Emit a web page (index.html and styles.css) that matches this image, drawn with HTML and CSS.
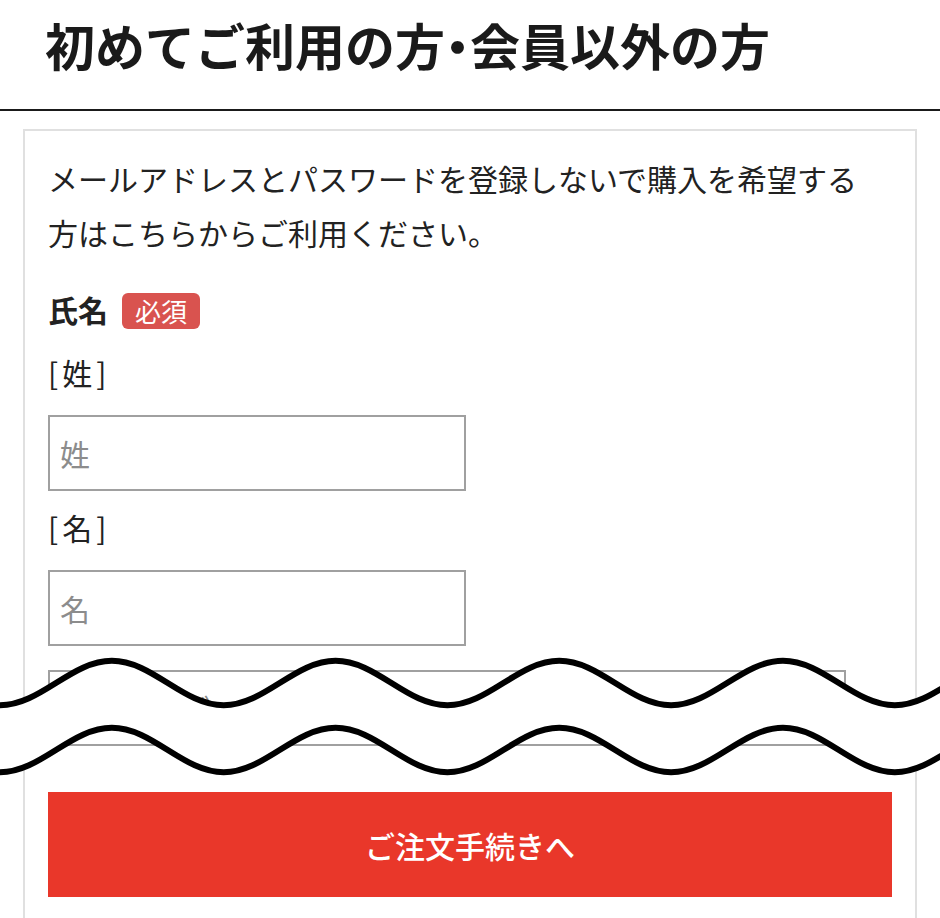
FILE: index.html
```html
<!DOCTYPE html>
<html lang="ja">
<head>
<meta charset="utf-8">
<title>初めてご利用の方・会員以外の方</title>
<link rel="stylesheet" href="styles.css">
</head>
<body>
<header class="page-head">
  <h1 class="page-title">初めてご利用の方<span class="dot">・</span>会員以外の方</h1>
</header>
<main class="card">
  <p class="lead">メールアドレスとパスワードを登録しないで購入を希望する<br>方はこちらからご利用ください。</p>
  <div class="field-head">
    <span class="field-name">氏名</span>
    <span class="badge">必須</span>
  </div>
  <div class="sub-label">[姓]</div>
  <input class="text-input half" type="text" placeholder="姓">
  <div class="sub-label">[名]</div>
  <input class="text-input half" type="text" placeholder="名">
  <input class="text-input wide" type="text" placeholder="例）ヤマダ">
  <button class="submit" type="button">ご注文手続きへ</button>
</main>
<div class="cut" aria-hidden="true">
  <svg class="cut-svg" viewBox="0 0 940 135" width="940" height="135">
    <path class="cut-fill" d="M0,55.25 c40.65,0 71.2,-44.5 111.85,-44.5 s71.2,44.5 111.85,44.5 s71.2,-44.5 111.85,-44.5 s71.2,44.5 111.85,44.5 s71.2,-44.5 111.85,-44.5 s71.2,44.5 111.85,44.5 s71.2,-44.5 111.85,-44.5 s71.2,44.5 111.85,44.5 s71.2,-44.5 111.85,-44.5 L1006.65,77.75 c-40.65,0 -71.2,44.5 -111.85,44.5 s-71.2,-44.5 -111.85,-44.5 s-71.2,44.5 -111.85,44.5 s-71.2,-44.5 -111.85,-44.5 s-71.2,44.5 -111.85,44.5 s-71.2,-44.5 -111.85,-44.5 s-71.2,44.5 -111.85,44.5 s-71.2,-44.5 -111.85,-44.5 s-71.2,44.5 -111.85,44.5 Z"/>
    <path class="cut-line" d="M0,55.25 c40.65,0 71.2,-44.5 111.85,-44.5 s71.2,44.5 111.85,44.5 s71.2,-44.5 111.85,-44.5 s71.2,44.5 111.85,44.5 s71.2,-44.5 111.85,-44.5 s71.2,44.5 111.85,44.5 s71.2,-44.5 111.85,-44.5 s71.2,44.5 111.85,44.5 s71.2,-44.5 111.85,-44.5"/>
    <path class="cut-line" d="M0,122.25 c40.65,0 71.2,-44.5 111.85,-44.5 s71.2,44.5 111.85,44.5 s71.2,-44.5 111.85,-44.5 s71.2,44.5 111.85,44.5 s71.2,-44.5 111.85,-44.5 s71.2,44.5 111.85,44.5 s71.2,-44.5 111.85,-44.5 s71.2,44.5 111.85,44.5 s71.2,-44.5 111.85,-44.5"/>
  </svg>
</div>
</body>
</html>
```
FILE: styles.css
```css
html, body {
  margin: 0;
  padding: 0;
  background: #fff;
}

body {
  position: relative;
  font-family: "Noto Sans CJK JP", "Noto Sans", sans-serif;
  color: #222;
}

.page-head {
  padding: 8px 45px 29px;
  border-bottom: 2px solid #1a1a1a;
}

.page-title {
  margin: 0;
  font-size: 50px;
  line-height: 72px;
  font-weight: 700;
  color: #1a1a1a;
  white-space: nowrap;
}

.dot {
  font-feature-settings: "halt" 1;
}

.card {
  margin: 18px 23px 0;
  border: 2px solid #e0e0e0;
  padding: 20px 23px 40px;
}

.lead {
  margin: 0;
  font-size: 30px;
  line-height: 54px;
}

.field-head {
  display: flex;
  align-items: center;
  gap: 14px;
  height: 54px;
  margin-top: 23px;
  margin-bottom: 2px;
}

.field-name {
  font-size: 30px;
  line-height: 54px;
  font-weight: 700;
}

.badge {
  background: #d9534f;
  color: #fff;
  font-size: 26px;
  line-height: 36px;
  padding: 0 13px;
  border-radius: 6px;
  margin-top: 3px;
}

.sub-label {
  font-size: 30px;
  line-height: 54px;
  letter-spacing: 4px;
  margin-top: 9px;
}

.text-input {
  display: block;
  box-sizing: border-box;
  height: 76px;
  margin: 16px 0 0;
  padding: 0 10px;
  border: 2px solid #a0a0a0;
  border-radius: 0;
  background: #fff;
  font-family: "Noto Sans CJK JP", sans-serif;
  font-size: 30px;
  color: #222;
  outline: none;
}

.text-input::placeholder {
  color: #8c8c8c;
}

.half {
  width: 418px;
}

.wide {
  width: 798px;
  margin-top: 24px;
}

.submit {
  display: block;
  width: 100%;
  height: 105px;
  margin-top: 46px;
  border: none;
  background: #e9372a;
  color: #fff;
  font-family: "Noto Sans CJK JP", sans-serif;
  font-size: 30px;
  font-weight: 500;
}

.cut {
  position: absolute;
  top: 650px;
  left: 0;
  width: 940px;
  height: 135px;
  pointer-events: none;
}

.cut-svg {
  display: block;
}

.cut-fill {
  fill: #fff;
}

.cut-line {
  fill: none;
  stroke: #000;
  stroke-width: 6;
}
```
